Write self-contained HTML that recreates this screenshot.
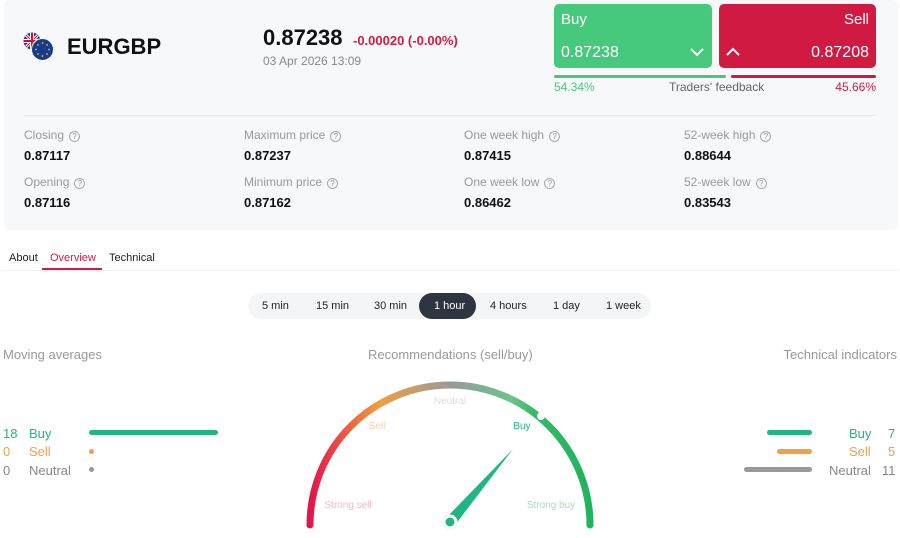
<!DOCTYPE html>
<html><head><meta charset="utf-8"><style>
*{margin:0;padding:0;box-sizing:border-box}
body{width:900px;height:538px;background:#fff;font-family:"Liberation Sans",sans-serif;position:relative;overflow:hidden;color:#111}
.a{position:absolute;white-space:nowrap}
.card{position:absolute;left:4px;top:0;width:894px;height:230px;background:#f7f8fa;border-radius:6px}
.lbl{font-size:12px;color:#999}
.val{font-size:13px;font-weight:bold;color:#111}
.q{display:inline-block;width:11px;height:11px;border:1px solid #aaa;border-radius:50%;font-size:8px;line-height:9px;text-align:center;color:#999;margin-left:5px;vertical-align:0}
.tf{font-size:11px;color:#222}
</style></head><body>
<div class="card"></div>
<svg class="a" style="left:23px;top:32px" width="32" height="30" viewBox="0 0 32 30">
<clipPath id="uk"><circle cx="9" cy="9" r="8.5"/></clipPath>
<g clip-path="url(#uk)">
<rect width="20" height="20" fill="#1c3f94"/>
<path d="M0 0L18 18M18 0L0 18" stroke="#fff" stroke-width="3"/>
<path d="M0 0L18 18M18 0L0 18" stroke="#d21034" stroke-width="1"/>
<path d="M9 0V18M0 9H18" stroke="#fff" stroke-width="4"/>
<path d="M9 0V18M0 9H18" stroke="#d21034" stroke-width="2"/>
</g>
<circle cx="19.5" cy="17.5" r="11" fill="#173c8f" stroke="#f7f8fa" stroke-width="1"/>
<g fill="#f5c400"><circle cx="19.5" cy="11" r="0.9"/><circle cx="19.5" cy="24" r="0.9"/><circle cx="13" cy="17.5" r="0.9"/><circle cx="26" cy="17.5" r="0.9"/><circle cx="15" cy="13" r="0.9"/><circle cx="24" cy="13" r="0.9"/><circle cx="15" cy="22" r="0.9"/><circle cx="24" cy="22" r="0.9"/></g>
</svg>
<div class="a" style="left:67px;top:34px;font-size:22px;font-weight:bold">EURGBP</div>
<div class="a" style="left:263px;top:25px;font-size:22px;font-weight:bold">0.87238</div>
<div class="a" style="left:353px;top:33px;font-size:13px;font-weight:bold;color:#d7193f">-0.00020 (-0.00%)</div>
<div class="a" style="left:263px;top:54px;font-size:12px;color:#888">03 Apr 2026 13:09</div>
<div class="a" style="left:554px;top:4px;width:158px;height:64px;background:#47c97d;border-radius:5px;color:#fff">
<div class="a" style="left:7px;top:7px;font-size:15px">Buy</div>
<div class="a" style="left:7px;top:40px;font-size:16px">0.87238</div>
<svg class="a" style="left:136px;top:43px" width="14" height="10"><path d="M1 2L7 8L13 2" stroke="#fff" stroke-width="2" fill="none"/></svg>
</div>
<div class="a" style="left:719px;top:4px;width:157px;height:64px;background:#d01a41;border-radius:5px;color:#fff">
<div class="a" style="right:7px;top:7px;font-size:15px">Sell</div>
<div class="a" style="right:7px;top:40px;font-size:16px">0.87208</div>
<svg class="a" style="left:7px;top:43px" width="14" height="10"><path d="M1 8L7 2L13 8" stroke="#fff" stroke-width="2" fill="none"/></svg>
</div>
<div class="a" style="left:554px;top:75px;width:172px;height:3px;background:#47c97d;border-radius:2px"></div>
<div class="a" style="left:731px;top:75px;width:145px;height:3px;background:#d01a41;border-radius:2px"></div>
<div class="a" style="left:554px;top:80px;font-size:12px;color:#47c97d">54.34%</div>
<div class="a" style="left:669px;top:80px;font-size:12px;color:#666">Traders' feedback</div>
<div class="a" style="right:24px;top:80px;font-size:12px;color:#d01a41">45.66%</div>
<div class="a" style="left:24px;top:115px;width:852px;height:1px;background:#e4e6ea"></div>
<div class="a lbl" style="left:24px;top:128px">Closing<span class="q">?</span></div>
<div class="a val" style="left:24px;top:148px">0.87117</div>
<div class="a lbl" style="left:24px;top:175px">Opening<span class="q">?</span></div>
<div class="a val" style="left:24px;top:195px">0.87116</div>
<div class="a lbl" style="left:244px;top:128px">Maximum price<span class="q">?</span></div>
<div class="a val" style="left:244px;top:148px">0.87237</div>
<div class="a lbl" style="left:244px;top:175px">Minimum price<span class="q">?</span></div>
<div class="a val" style="left:244px;top:195px">0.87162</div>
<div class="a lbl" style="left:464px;top:128px">One week high<span class="q">?</span></div>
<div class="a val" style="left:464px;top:148px">0.87415</div>
<div class="a lbl" style="left:464px;top:175px">One week low<span class="q">?</span></div>
<div class="a val" style="left:464px;top:195px">0.86462</div>
<div class="a lbl" style="left:684px;top:128px">52-week high<span class="q">?</span></div>
<div class="a val" style="left:684px;top:148px">0.88644</div>
<div class="a lbl" style="left:684px;top:175px">52-week low<span class="q">?</span></div>
<div class="a val" style="left:684px;top:195px">0.83543</div>
<div class="a" style="left:9px;top:252px;font-size:11px;color:#222">About</div>
<div class="a" style="left:50px;top:252px;font-size:11px;color:#d7193f">Overview</div>
<div class="a" style="left:42px;top:268px;width:60px;height:2px;background:#d7193f"></div>
<div class="a" style="left:109px;top:252px;font-size:11px;color:#222">Technical</div>
<div class="a" style="left:2px;top:270px;width:896px;height:1px;background:#eef0f3"></div>
<div class="a" style="left:248px;top:293px;width:403px;height:26px;background:#f4f5f7;border-radius:13px"></div>
<div class="a" style="left:419px;top:293px;width:57px;height:26px;background:#2e3440;border-radius:13px"></div>
<div class="a tf" style="left:262px;top:300px">5 min</div>
<div class="a tf" style="left:316px;top:300px">15 min</div>
<div class="a tf" style="left:374px;top:300px">30 min</div>
<div class="a tf" style="left:434px;top:300px;color:#fff">1 hour</div>
<div class="a tf" style="left:490px;top:300px">4 hours</div>
<div class="a tf" style="left:553px;top:300px">1 day</div>
<div class="a tf" style="left:606px;top:300px">1 week</div>
<div class="a" style="left:3px;top:347px;font-size:13px;color:#999">Moving averages</div>
<div class="a" style="left:368px;top:347px;font-size:13px;color:#999">Recommendations (sell/buy)</div>
<div class="a" style="right:3px;top:347px;font-size:13px;color:#999">Technical indicators</div>
<div class="a" style="left:3px;top:426px;font-size:13px;color:#1fb585">18</div>
<div class="a" style="left:29px;top:426px;font-size:13px;color:#1fb585">Buy</div>
<div class="a" style="left:89px;top:430px;width:129px;height:5px;background:#1fb585;border-radius:3px"></div>
<div class="a" style="left:3px;top:444px;font-size:13px;color:#f0a04b">0</div>
<div class="a" style="left:29px;top:444px;font-size:13px;color:#f0a04b">Sell</div>
<div class="a" style="left:89px;top:449px;width:5px;height:5px;background:#f0a04b;border-radius:3px"></div>
<div class="a" style="left:3px;top:463px;font-size:13px;color:#888">0</div>
<div class="a" style="left:29px;top:463px;font-size:13px;color:#888">Neutral</div>
<div class="a" style="left:89px;top:467px;width:5px;height:5px;background:#999;border-radius:3px"></div>
<div class="a" style="left:767px;top:430px;width:45px;height:5px;background:#1fb585;border-radius:3px"></div>
<div class="a" style="left:777px;top:449px;width:35px;height:5px;background:#f0a04b;border-radius:3px"></div>
<div class="a" style="left:744px;top:467px;width:68px;height:5px;background:#999;border-radius:3px"></div>
<div class="a" style="left:849px;top:426px;font-size:13px;color:#1fb585">Buy</div>
<div class="a" style="left:888px;top:426px;font-size:13px;color:#1fb585">7</div>
<div class="a" style="left:849px;top:444px;font-size:13px;color:#f0a04b">Sell</div>
<div class="a" style="left:888px;top:444px;font-size:13px;color:#f0a04b">5</div>
<div class="a" style="left:829px;top:463px;font-size:13px;color:#888">Neutral</div>
<div class="a" style="left:882px;top:463px;font-size:13px;color:#888">11</div>
<svg class="a" style="left:0;top:0" width="900" height="538">
<defs><linearGradient id="g" x1="310" y1="0" x2="590" y2="0" gradientUnits="userSpaceOnUse">
<stop offset="0" stop-color="#e0154c"/><stop offset="0.25" stop-color="#f0a040"/><stop offset="0.5" stop-color="#999"/><stop offset="0.72" stop-color="#6cc48c"/><stop offset="0.8" stop-color="#35b965"/><stop offset="1" stop-color="#20b35e"/></linearGradient></defs>
<path d="M310 525 A140 140 0 0 1 590 525" fill="none" stroke="url(#g)" stroke-width="7" stroke-linecap="round"/>
<circle cx="541" cy="416" r="4" fill="#fff"/>
<path d="M446 518 L513 449 L455 525 Z" fill="#1fb585"/>
<circle cx="450" cy="522" r="7" fill="#fff" stroke="#eee"/>
<circle cx="450" cy="522" r="4.5" fill="#1fb585"/>
<g font-family="Liberation Sans" font-size="10">
<text x="450" y="404" text-anchor="middle" fill="#ddd">Neutral</text>
<text x="377" y="429" text-anchor="middle" fill="#f5d0a8">Sell</text>
<text x="522" y="429" text-anchor="middle" fill="#1fb585">Buy</text>
<text x="348" y="508" text-anchor="middle" fill="#f5b5c5">Strong sell</text>
<text x="551" y="508" text-anchor="middle" fill="#a8e0c0">Strong buy</text>
</g></svg>
</body></html>
